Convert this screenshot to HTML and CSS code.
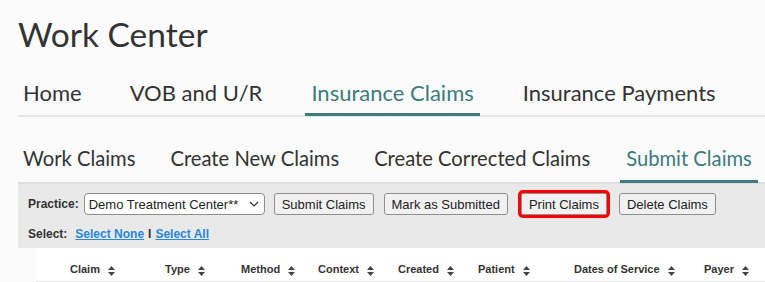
FILE: index.html
```html
<!DOCTYPE html>
<html>
<head>
    <title>Work Center</title>
    <meta charset="UTF-8">
    <link rel="stylesheet" href="styles.css">
</head>
<body>
    <div class="page">
        <h1 class="page-title">Work Center</h1>

        <nav class="tabs tabs-main">
            <a class="tab">Home</a>
            <a class="tab">VOB and U/R</a>
            <a class="tab active">Insurance Claims</a>
            <a class="tab">Insurance Payments</a>
        </nav>

        <nav class="tabs tabs-sub">
            <a class="tab">Work Claims</a>
            <a class="tab">Create New Claims</a>
            <a class="tab">Create Corrected Claims</a>
            <a class="tab active">Submit Claims</a>
        </nav>

        <div class="toolbar">
            <div class="toolbar-row">
                <label class="field-label" for="practice">Practice:</label>
                <div class="select-wrap">
                    <select id="practice" class="practice-select">
                        <option>Demo Treatment Center**</option>
                    </select>
                    <svg class="select-arrow" width="10" height="6" viewBox="0 0 10 6"><path d="M1 1l4 4 4-4" fill="none" stroke="#333" stroke-width="1.2"/></svg>
                </div>
                <button class="btn">Submit Claims</button>
                <button class="btn">Mark as Submitted</button>
                <button class="btn btn-marked">Print Claims</button>
                <button class="btn">Delete Claims</button>
            </div>
            <div class="toolbar-row select-row">
                <span class="field-label">Select:</span>
                <a class="link" href="#">Select None</a>
                <span class="sep">I</span>
                <a class="link" href="#">Select All</a>
            </div>
        </div>

        <div class="claims-head">
            <span></span>
            <span class="col">Claim <svg class="sort" width="7" height="10" viewBox="0 0 7 10"><path d="M3.5 0L7 4H0z M3.5 10L0 6h7z" fill="#444"/></svg></span>
            <span class="col">Type <svg class="sort" width="7" height="10" viewBox="0 0 7 10"><path d="M3.5 0L7 4H0z M3.5 10L0 6h7z" fill="#444"/></svg></span>
            <span class="col">Method <svg class="sort" width="7" height="10" viewBox="0 0 7 10"><path d="M3.5 0L7 4H0z M3.5 10L0 6h7z" fill="#444"/></svg></span>
            <span class="col">Context <svg class="sort" width="7" height="10" viewBox="0 0 7 10"><path d="M3.5 0L7 4H0z M3.5 10L0 6h7z" fill="#444"/></svg></span>
            <span class="col">Created <svg class="sort" width="7" height="10" viewBox="0 0 7 10"><path d="M3.5 0L7 4H0z M3.5 10L0 6h7z" fill="#444"/></svg></span>
            <span class="col">Patient <svg class="sort" width="7" height="10" viewBox="0 0 7 10"><path d="M3.5 0L7 4H0z M3.5 10L0 6h7z" fill="#444"/></svg></span>
            <span class="col">Dates of Service <svg class="sort" width="7" height="10" viewBox="0 0 7 10"><path d="M3.5 0L7 4H0z M3.5 10L0 6h7z" fill="#444"/></svg></span>
            <span class="col">Payer <svg class="sort" width="7" height="10" viewBox="0 0 7 10"><path d="M3.5 0L7 4H0z M3.5 10L0 6h7z" fill="#444"/></svg></span>
        </div>
    </div>
</body>
</html>
```

FILE: styles.css
```css
body { margin: 0; background: #fbfbfb; color: #333; font-family: Lato, "Liberation Sans", sans-serif; overflow: hidden; }
.page { margin-left: 18px; }

.page-title { margin: 0; padding-top: 14px; font-size: 33.5px; line-height: 40px; font-weight: 400; color: #333; }

.tabs { display: flex; border-bottom: 2px solid #e2e6e6; }
.tab { padding: 0 5px; border-bottom: 3px solid transparent; margin-bottom: -1px; color: #333; cursor: pointer; }
.tab.active { color: #3d7b7c; border-bottom-color: #3d7b7c; padding: 0 6px; }

.tabs-main { margin-top: 27px; gap: 38px; }
.tabs-main .tab { font-size: 22px; line-height: 24px; padding-bottom: 8px; }

.tabs-sub { margin-top: 29px; gap: 25px; border-bottom-color: #dedede; }
.tabs-sub .tab { font-size: 20.2px; line-height: 24px; padding-bottom: 10px; }

.toolbar { background: #e9e9e9; padding: 9px 10px 6px; font-family: "Liberation Sans", Arial, sans-serif; }
.toolbar-row { display: flex; align-items: center; }
.field-label { font-size: 12px; font-weight: bold; color: #333; margin-right: 5px; }

.select-wrap { position: relative; margin-right: 9px; }
.practice-select { appearance: none; -webkit-appearance: none; width: 181px; height: 22px; padding: 0 20px 0 4px; border: 1px solid #8d8d8d; border-radius: 4px; background: #fff; font-family: "Liberation Sans", Arial, sans-serif; font-size: 13px; color: #222; }
.select-arrow { position: absolute; right: 6px; top: 8px; pointer-events: none; }

.btn { height: 22px; padding: 0 7px; margin-right: 10px; border: 1px solid #8f8f8f; border-radius: 3px; background: #f1f1f1; font-family: "Liberation Sans", Arial, sans-serif; font-size: 13px; color: #222; cursor: pointer; }
.btn-marked { margin: 0 12px 0 3px; box-shadow: 0 0 0 3px #f00; border-radius: 2px; }

.select-row { margin-top: 11px; line-height: 16px; }
.select-row .field-label { margin-right: 8px; }
.link { font-size: 12px; font-weight: bold; color: #2b87d6; text-decoration: underline; }
.sep { font-size: 12px; font-weight: bold; margin: 0 4px; color: #333; }

.claims-head { display: grid; grid-template-columns: 34px 95px 76px 77px 80px 80px 96px 130px auto; margin-left: 18px; padding: 14px 0 5px; border-bottom: 1px solid #e2e2e2; background: #fff; font-family: "Liberation Sans", Arial, sans-serif; font-size: 11px; font-weight: bold; line-height: 14px; color: #333; }
.col { white-space: nowrap; }
.sort { vertical-align: -3px; margin-left: 5px; }
```
